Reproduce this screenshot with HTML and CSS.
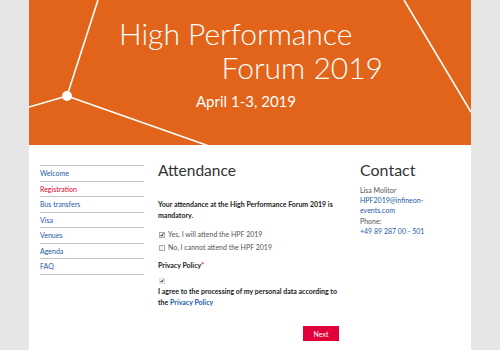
FILE: index.html
```html
<!DOCTYPE html>
<html lang="en">
<head>
    <meta charset="UTF-8">
    <title>High Performance Forum 2019 - Registration</title>
    <link rel="stylesheet" href="styles.css">
</head>
<body>
    <div class="page">
        <header class="hero">
            <!-- network lines over the orange -->
            <svg class="hero-lines" width="442" height="145" viewBox="0 0 442 145">
                <g stroke="#fff" stroke-width="1.6" fill="none">
                    <line x1="69" y1="0" x2="38" y2="96"/>
                    <line x1="38" y1="96" x2="0" y2="107"/>
                    <line x1="38" y1="96" x2="180" y2="146"/>
                    <line x1="375" y1="0" x2="442" y2="112"/>
                </g>
                <circle cx="38" cy="96" r="5" fill="#fff"/>
            </svg>
            <h1 class="hero-title">
                <span class="line-one">High Performance</span>
                <span class="line-two">Forum 2019</span>
            </h1>
            <div class="hero-date">April 1-3, 2019</div>
        </header>

        <div class="content">
            <ul class="sidenav">
                <li><a href="#">Welcome</a></li>
                <li><a href="#" class="active">Registration</a></li>
                <li><a href="#">Bus transfers</a></li>
                <li><a href="#">Visa</a></li>
                <li><a href="#">Venues</a></li>
                <li><a href="#">Agenda</a></li>
                <li><a href="#">FAQ</a></li>
            </ul>

            <main class="main">
                <h2>Attendance</h2>
                <p class="mandatory">Your attendance at the High Performance Forum 2019 is mandatory.</p>

                <div class="options">
                    <label class="option">
                        <span class="box checked">
                            <svg width="6" height="6" viewBox="0 0 10 10"><path d="M1.5 5 L4 8 L8.5 1.5" stroke="#111" stroke-width="2.4" fill="none"/></svg>
                        </span>
                        Yes, I will attend the HPF 2019
                    </label>
                    <label class="option">
                        <span class="box"></span>
                        No, I cannot attend the HPF 2019
                    </label>
                </div>

                <div class="field-label">Privacy Policy<span class="req">*</span></div>
                <div class="agree-box">
                    <span class="box checked plain">
                        <svg width="6" height="6" viewBox="0 0 10 10"><path d="M1.5 5 L4 8 L8.5 1.5" stroke="#111" stroke-width="2.4" fill="none"/></svg>
                    </span>
                </div>
                <p class="agree">
                    <span class="agree-line">I agree to the processing of my personal data according to</span>
                    <span class="agree-line">the <a href="#">Privacy Policy</a></span>
                </p>

                <div class="actions">
                    <button class="button">Next</button>
                </div>
            </main>

            <aside class="contact">
                <h2>Contact</h2>
                <p>
                    Lisa Molitor<br>
                    <a href="#">HPF2019@infineon-<br>events.com</a><br>
                    Phone:<br>
                    <a href="#">+49 89 287 00 - 501</a>
                </p>
            </aside>
        </div>
    </div>
</body>
</html>
```

FILE: styles.css
```css
* {
    margin: 0;
    padding: 0;
    box-sizing: border-box;
}

body {
    font-family: Lato, "Open Sans", sans-serif;
    background: #e6e6e6;
    color: #444;
}

a {
    color: #1d5aa6;
    text-decoration: none;
}

.page {
    width: 442px;
    margin-left: 29px;
    min-height: 350px;
    background: white;
}

.hero {
    position: relative;
    height: 145px;
    background: #e1641a;
    color: white;
    overflow: hidden;
}

.hero-lines {
    position: absolute;
    left: 0;
    top: 0;
}

.hero-title {
    position: relative;
    padding: 16px 88px 0 90px;
    font-size: 30px;
    font-weight: 300;
    line-height: 34px;
}

.hero-title span {
    display: block;
}

.line-two {
    text-align: right;
}

.hero-date {
    position: relative;
    margin-top: 7px;
    padding-right: 8px;
    text-align: center;
    font-size: 15px;
    line-height: 20px;
}

.content {
    display: flex;
    padding: 0 11px;
}

.sidenav {
    list-style: none;
    width: 104px;
    flex-shrink: 0;
    margin-top: 20px;
    border-bottom: 1px solid #c4c4c4;
    align-self: flex-start;
}

.sidenav li {
    border-top: 1px solid #c4c4c4;
    font-size: 7px;
    line-height: 14.5px;
}

.sidenav a.active {
    color: #e4002b;
}

.main {
    width: 182px;
    margin-left: 14px;
    padding-top: 15px;
}

h2 {
    font-size: 15.5px;
    font-weight: 400;
    line-height: 20px;
    color: #333;
}

.mandatory {
    margin-top: 19px;
    font-size: 7px;
    font-weight: bold;
    line-height: 11px;
    color: #222;
}

.options {
    margin-top: 7px;
}

.option {
    display: flex;
    align-items: center;
    gap: 3px;
    font-size: 7px;
    line-height: 13px;
    color: #555;
}

.box {
    display: inline-flex;
    align-items: center;
    justify-content: center;
    width: 6px;
    height: 6px;
    margin-left: 1px;
    border: 1px solid #aaa;
    background: #f4f4f4;
}

.box.plain {
    border-color: #e0e0e0;
}

.field-label {
    margin-top: 6px;
    font-size: 7px;
    font-weight: bold;
    line-height: 11px;
    color: #222;
}

.req {
    color: #e4002b;
}

.agree-box {
    display: flex;
    align-items: center;
    height: 10px;
    margin-top: 5px;
}

.agree {
    font-size: 7px;
    font-weight: bold;
    line-height: 10.5px;
    color: #222;
}

.agree-line {
    display: block;
}

.agree a {
    font-weight: bold;
}

.actions {
    display: flex;
    justify-content: flex-end;
    padding-right: 1px;
    margin-top: 19px;
}

.button {
    width: 36px;
    height: 15px;
    background: #e2003a;
    color: white;
    border: none;
    font-family: inherit;
    font-size: 7px;
    cursor: pointer;
}

.contact {
    margin-left: 20px;
    padding-top: 15px;
}

.contact h2 {
    font-size: 16px;
}

.contact p {
    margin-top: 5px;
    font-size: 7px;
    line-height: 10.2px;
    color: #555;
}
```
